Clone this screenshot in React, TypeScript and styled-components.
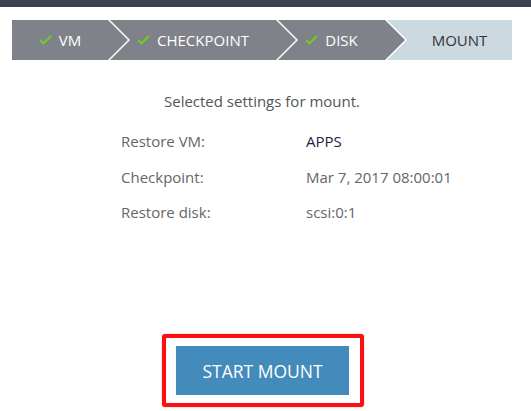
import styled, { createGlobalStyle } from 'styled-components'

const GlobalStyle = createGlobalStyle`
  body {
    margin: 0;
    background: #fff;
    font-family: 'Open Sans', 'Noto Sans', sans-serif;
  }
`

const Page = styled.div`
  width: 531px;
  height: 411px;
  overflow: hidden;
  background: #fff;
`

const TopBar = styled.div`
  height: 7px;
  background: #3c414e;
`

const Content = styled.div`
  padding: 13px 19px 0 12px;
`

const Stepper = styled.div`
  display: flex;
  height: 40px;
`

const Step = styled.div<{ $width: number; $current?: boolean; $first?: boolean; $last?: boolean }>`
  flex: 0 0 ${({ $width }) => $width}px;
  margin-left: ${({ $first }) => ($first ? 0 : -18)}px;
  display: flex;
  align-items: center;
  justify-content: center;
  column-gap: 7px;
  padding-right: ${({ $last }) => ($last ? 0 : 20)}px;
  padding-left: ${({ $last }) => ($last ? 20 : 0)}px;
  box-sizing: border-box;
  background: ${({ $current }) => ($current ? '#cdd9e1' : '#808289')};
  color: ${({ $current }) => ($current ? '#333' : '#fff')};
  font-size: 15px;
  text-transform: uppercase;
  clip-path: ${({ $first, $last }) =>
    `polygon(0 0, ${$last ? '100% 0, 100% 100%' : 'calc(100% - 20px) 0, 100% 50%, calc(100% - 20px) 100%'}, 0 100%${$first ? '' : ', 20px 50%'})`};
`

const Check = () => (
  <svg width="13" height="10" viewBox="0 0 13 10">
    <polyline points="1,5 4.5,8.5 12,1" fill="none" stroke="#6fd11f" strokeWidth="1.8" />
  </svg>
)

const Title = styled.p`
  margin: 31px 0 0;
  text-align: center;
  font-size: 15px;
  line-height: 20px;
  color: #555;
`

const Summary = styled.dl`
  display: grid;
  grid-template-columns: 185px auto;
  row-gap: 15.5px;
  margin: 20px 0 0 109px;
  font-size: 15px;
  line-height: 20px;
  color: #666;
`

const Label = styled.dt`
  margin: 0;
`

const Value = styled.dd<{ $strong?: boolean }>`
  margin: 0;
  color: ${({ $strong }) => ($strong ? '#1e1e48' : '#666')};
`

const ButtonRow = styled.div`
  display: flex;
  justify-content: center;
  margin-top: 112px;
  padding-left: 2px;
`

const Highlight = styled.div`
  border: 4px solid #ff1010;
  border-radius: 3px;
  padding: 8px 11px 8px 10px;
  box-shadow: 0 0 1px #ff0000;
`

const Button = styled.button`
  display: block;
  width: 173px;
  height: 49px;
  border: none;
  background: #428bba;
  color: #fff;
  font-family: inherit;
  font-size: 17.5px;
  text-transform: uppercase;
  cursor: pointer;
`

export default function App() {
  return (
    <Page>
      <GlobalStyle />
      <TopBar />
      <Content>
        <Stepper>
          <Step $width={116} $first>
            <Check />
            VM
          </Step>
          <Step $width={186}>
            <Check />
            Checkpoint
          </Step>
          <Step $width={127}>
            <Check />
            Disk
          </Step>
          <Step $width={125} $current $last>
            Mount
          </Step>
        </Stepper>
        <Title>Selected settings for mount.</Title>
        <Summary>
          <Label>Restore VM:</Label>
          <Value $strong>APPS</Value>
          <Label>Checkpoint:</Label>
          <Value>Mar 7, 2017 08:00:01</Value>
          <Label>Restore disk:</Label>
          <Value>scsi:0:1</Value>
        </Summary>
        <ButtonRow>
          <Highlight>
            <Button>Start Mount</Button>
          </Highlight>
        </ButtonRow>
      </Content>
    </Page>
  )
}
